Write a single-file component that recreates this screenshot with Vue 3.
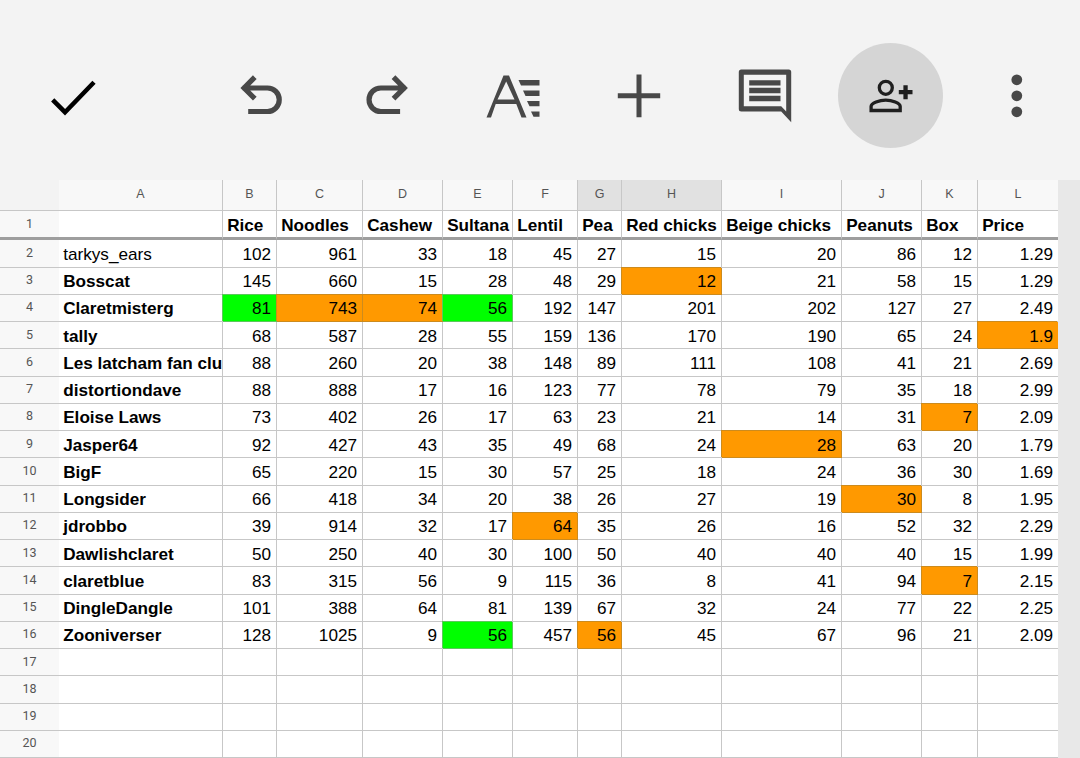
<template>
  <div class="page">
    <header class="toolbar">
      <button class="tool check">
        <svg width="60" height="60" viewBox="44 65.5 60 60">
          <path d="M52.7 99.3 65 111.7 94 81.7" fill="none" stroke="#000" stroke-width="4.5" />
        </svg>
      </button>
      <div class="tools">
        <button class="tool">
          <svg width="60" height="60" viewBox="230.5 65.5 60 60">
            <path d="M254.3 76.7 243.6 87.5 254.3 98.2M242 87.5H267a11.75 11.75 0 0 1 0 23.5H247.7" fill="none" stroke="#484848" stroke-width="5.2" />
          </svg>
        </button>
        <button class="tool">
          <svg width="60" height="60" viewBox="356.5 65.5 60 60">
            <path d="M393 76.7 403.700 87.5 393 98.2M405.300 87.5H380.300a11.75 11.75 0 0 0 0 23.5H399.600" fill="none" stroke="#484848" stroke-width="5.2" />
          </svg>
        </button>
        <button class="tool">
          <svg width="60" height="60" viewBox="482.5 65.5 60 60">
            <path fill="#484848" fill-rule="evenodd" d="M503 75h5.5L526 117h-5l-5.2-13.5h-20.6L490.5 117H486ZM505.7 81 497 99h17Z" />
            <path fill="#484848" d="M518 79.5h21V85h-18.5ZM522.500 90H539v5.500H525ZM526.500 100.500H539v5.300H529ZM530.500 111H539v5.300H533Z" />
          </svg>
        </button>
        <button class="tool">
          <svg width="60" height="60" viewBox="608.500 65.500 60 60">
            <path fill="#484848" d="M636 74h5v18.800h18.700v5H641V116.700h-5V97.800H617.300v-5H636Z" />
          </svg>
        </button>
        <button class="tool">
          <svg width="60" height="60" viewBox="734.500 65.500 60 60">
            <path fill="#484848" fill-rule="evenodd" d="M740.800 69H788.200a2.500 2.500 0 0 1 2.500 2.500V121.700L780.700 111H740.800a2.500 2.500 0 0 1-2.500-2.500V71.500a2.500 2.500 0 0 1 2.500-2.500ZM743.300 74.300V105.700H780.700L785.700 111V74.300Z" />
            <path fill="#484848" d="M748.700 79.700H780V85H748.700ZM748.700 87.300H780V92.700H748.700ZM748.700 95.300H780V100.700H748.700Z" />
          </svg>
        </button>
        <button class="tool">
          <span class="share">
            <svg width="60" height="60" viewBox="860.500 65.500 60 60">
              <circle cx="885.300" cy="87.300" r="6.500" fill="none" stroke="#1f1f1f" stroke-width="3.300" />
              <path d="M870.600 110V106C870.600 102.500 879 99.600 885.200 99.600S899.700 102.500 899.700 106V110Z" fill="none" stroke="#1f1f1f" stroke-width="3.300" />
              <path fill="#1f1f1f" d="M902.900 84.700h4.300v4.700h4.800v4.300h-4.800v5h-4.300v-5h-4.600v-4.300h4.600Z" />
            </svg>
          </span>
        </button>
        <button class="tool">
          <svg width="60" height="60" viewBox="986.500 65.500 60 60">
            <circle cx="1016.300" cy="79.300" r="5.400" fill="#484848" />
            <circle cx="1016.300" cy="95.300" r="5.400" fill="#484848" />
            <circle cx="1016.300" cy="111.300" r="5.400" fill="#484848" />
          </svg>
        </button>
      </div>
    </header>

    <div class="sheet">
      <div class="corner"></div>
      <div
        v-for="(c, i) in columns"
        :key="c"
        class="col-head"
        :class="{ picked: c === 'G' || c === 'H', last: i === 11 }"
      >{{ c }}</div>

      <template v-for="(row, r) in rows" :key="r">
        <div class="row-head" :class="{ frozen: r === 0 }">{{ r + 1 }}</div>
        <div
          v-for="(val, c) in row"
          :key="c"
          class="cell"
          :class="cellClass(r, c)"
        >{{ val }}</div>
      </template>
    </div>
  </div>
</template>

<script setup>
const columns = ['A', 'B', 'C', 'D', 'E', 'F', 'G', 'H', 'I', 'J', 'K', 'L']

const blank = Array(12).fill('')

const rows = [
  ['', 'Rice', 'Noodles', 'Cashew', 'Sultana', 'Lentil', 'Pea', 'Red chicks', 'Beige chicks', 'Peanuts', 'Box', 'Price'],
  ['tarkys_ears', 102, 961, 33, 18, 45, 27, 15, 20, 86, 12, 1.29],
  ['Bosscat', 145, 660, 15, 28, 48, 29, 12, 21, 58, 15, 1.29],
  ['Claretmisterg', 81, 743, 74, 56, 192, 147, 201, 202, 127, 27, 2.49],
  ['tally', 68, 587, 28, 55, 159, 136, 170, 190, 65, 24, 1.9],
  ['Les latcham fan club', 88, 260, 20, 38, 148, 89, 111, 108, 41, 21, 2.69],
  ['distortiondave', 88, 888, 17, 16, 123, 77, 78, 79, 35, 18, 2.99],
  ['Eloise Laws', 73, 402, 26, 17, 63, 23, 21, 14, 31, 7, 2.09],
  ['Jasper64', 92, 427, 43, 35, 49, 68, 24, 28, 63, 20, 1.79],
  ['BigF', 65, 220, 15, 30, 57, 25, 18, 24, 36, 30, 1.69],
  ['Longsider', 66, 418, 34, 20, 38, 26, 27, 19, 30, 8, 1.95],
  ['jdrobbo', 39, 914, 32, 17, 64, 35, 26, 16, 52, 32, 2.29],
  ['Dawlishclaret', 50, 250, 40, 30, 100, 50, 40, 40, 40, 15, 1.99],
  ['claretblue', 83, 315, 56, 9, 115, 36, 8, 41, 94, 7, 2.15],
  ['DingleDangle', 101, 388, 64, 81, 139, 67, 32, 24, 77, 22, 2.25],
  ['Zooniverser', 128, 1025, 9, 56, 457, 56, 45, 67, 96, 21, 2.09],
  blank,
  blank,
  blank,
  blank,
]

const marks = {
  '2:7': 'orange',
  '3:1': 'green',
  '3:2': 'orange',
  '3:3': 'orange',
  '3:4': 'green',
  '4:11': 'orange',
  '7:10': 'orange',
  '8:8': 'orange',
  '10:9': 'orange',
  '11:5': 'orange',
  '13:10': 'orange',
  '15:4': 'green',
  '15:6': 'orange',
}

function cellClass(r, c) {
  return [
    marks[`${r}:${c}`],
    {
      title: r === 0,
      name: c === 0,
      bold: r === 0 || (c === 0 && r > 1),
      num: r > 0 && c > 0,
      last: c === 11,
    },
  ]
}
</script>

<style>
html, body { overflow: hidden; background: #e8e8e8; }
</style>

<style scoped>
.page { width: 1080px; height: 758px; overflow: hidden; }
.toolbar { height: 180px; box-sizing: border-box; padding: 11px 0 0 44px; display: flex; align-items: center; background: #f3f3f3; }
.tools { margin-left: auto; margin-right: 0.5px; display: flex; }
.tool { width: 126px; height: 105px; padding: 0; border: 0; background: none; display: flex; align-items: center; justify-content: center; }
.tool.check { width: 60px; }
.share { width: 105px; height: 105px; border-radius: 50%; background: #d5d5d5; display: flex; align-items: center; justify-content: center; }

.sheet {
  display: grid;
  grid-template-columns: 59px 164px 54px 86px 80px 70px 65px 44px 100px 120px 80px 56px 80px;
  grid-template-rows: 31px 29px 27.6px repeat(18, 27.25px);
  width: 1058px;
  background: #fff;
  font-family: "Liberation Sans", Arial, sans-serif;
}
.corner { background: #f3f3f3; border-bottom: 1px solid #c7c7c7; }
.col-head {
  display: flex;
  align-items: center;
  justify-content: center;
  background: #f8f8f8;
  border-right: 1px solid #c7c7c7;
  border-bottom: 1px solid #c7c7c7;
  font-size: 12.5px;
  color: #555;
  padding-bottom: 2px;
  box-sizing: border-box;
}
.col-head.picked { background: #e1e1e1; }
.col-head.last { border-right: 0; }
.row-head {
  display: flex;
  align-items: center;
  justify-content: center;
  background: #f8f8f8;
  border-bottom: 1px solid #c7c7c7;
  font-family: Roboto, sans-serif;
  font-size: 12.5px;
  color: #555;
  padding-bottom: 2px;
  box-sizing: border-box;
}
.row-head.frozen { border-bottom: 3px solid #9e9e9e; }
.cell {
  box-sizing: border-box;
  display: flex;
  align-items: center;
  padding: 2px 5px 0 4.2px;
  border-right: 1px solid #c7c7c7;
  border-bottom: 1px solid #c7c7c7;
  font-size: 17.15px;
  color: #000;
  white-space: nowrap;
  overflow: hidden;
  min-width: 0;
}
.cell.title { border-bottom: 3px solid #9e9e9e; }
.cell.bold { font-weight: 700; }
.cell.num { justify-content: flex-end; }
.cell.last { border-right: 0; }
.cell.orange { background: #ff9900; border-color: #cc8b1e; box-shadow: -1px -1px 0 #cc8b1e; }
.cell.green { background: #00ff00; border-color: #5cc85c; box-shadow: -1px -1px 0 #5cc85c; }
</style>
